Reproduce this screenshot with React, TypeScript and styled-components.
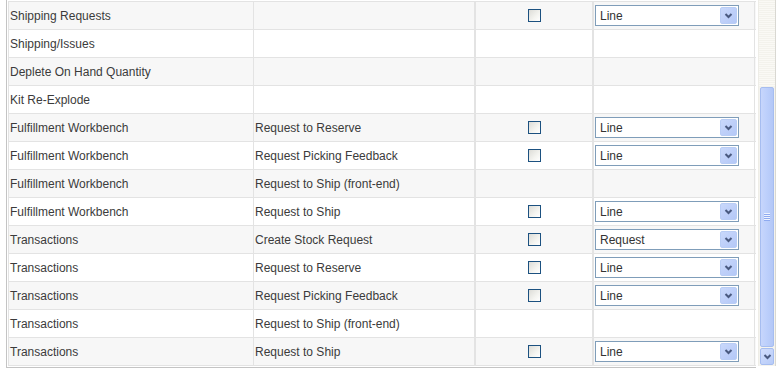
import React from "react";
import styled, { createGlobalStyle } from "styled-components";

interface RowData {
  area: string;
  action: string;
  check: boolean;
  select?: string;
}

const rows: RowData[] = [
  { area: "Shipping Requests", action: "", check: true, select: "Line" },
  { area: "Shipping/Issues", action: "", check: false },
  { area: "Deplete On Hand Quantity", action: "", check: false },
  { area: "Kit Re-Explode", action: "", check: false },
  { area: "Fulfillment Workbench", action: "Request to Reserve", check: true, select: "Line" },
  { area: "Fulfillment Workbench", action: "Request Picking Feedback", check: true, select: "Line" },
  { area: "Fulfillment Workbench", action: "Request to Ship (front-end)", check: false },
  { area: "Fulfillment Workbench", action: "Request to Ship", check: true, select: "Line" },
  { area: "Transactions", action: "Create Stock Request", check: true, select: "Request" },
  { area: "Transactions", action: "Request to Reserve", check: true, select: "Line" },
  { area: "Transactions", action: "Request Picking Feedback", check: true, select: "Line" },
  { area: "Transactions", action: "Request to Ship (front-end)", check: false },
  { area: "Transactions", action: "Request to Ship", check: true, select: "Line" },
];

const GlobalStyle = createGlobalStyle`
  html, body {
    margin: 0;
    padding: 0;
    background: #fff;
  }
  body {
    font-family: "Liberation Sans", Arial, sans-serif;
  }
`;

const Page = styled.div`
  width: 779px;
  height: 370px;
  display: flex;
  padding-left: 6px;
  box-sizing: border-box;
  overflow: hidden;
`;

const Frame = styled.div`
  display: flex;
  height: 367px;
  border-left: 1px solid #c4c4c4;
  border-bottom: 1px solid #c4c4c4;
  padding-left: 1px;
`;

const Grid = styled.div`
  display: flex;
  flex-direction: column;
  padding-top: 1px;
  width: 748px;
`;

const Row = styled.div<{ $odd: boolean }>`
  display: grid;
  grid-template-columns: 245px 221px 119px 162px;
  height: 28px;
  box-sizing: border-box;
  border-top: 1px solid #e3e3e3;
  background: ${(p) => (p.$odd ? "#f7f7f7" : "#ffffff")};
  &:last-child {
    border-bottom: 1px solid #e3e3e3;
    height: 29px;
  }
`;

const Cell = styled.div<{ $center?: boolean; $wide?: boolean }>`
  display: flex;
  align-items: center;
  justify-content: ${(p) => (p.$center ? "center" : "flex-start")};
  border-left: ${(p) => (p.$wide ? 2 : 1)}px solid #e3e3e3;
  border-right: ${(p) => (p.$wide ? "1px solid #e3e3e3" : "none")};
  padding-left: 1px;
  font-size: 12px;
  color: #3b3b3b;
  white-space: nowrap;
  overflow: hidden;
  &:last-child {
    border-right: 1px solid #e3e3e3;
    padding-left: 1px;
  }
`;

const CheckBox = styled.span`
  display: block;
  width: 13px;
  height: 13px;
  box-sizing: border-box;
  border: 1px solid #1c5180;
  background: linear-gradient(135deg, #dcdcd7 0%, #f4f4f0 60%, #ffffff 100%);
`;

const Select = styled.div`
  display: flex;
  align-items: center;
  width: 144px;
  height: 21px;
  box-sizing: border-box;
  border: 1px solid #7f9db9;
  background: #fff;
  padding: 1px;
  font-size: 12px;
  color: #333;
`;

const SelectText = styled.span`
  flex: 1;
  padding-left: 3px;
`;

const DropButton = styled.span`
  width: 17px;
  height: 17px;
  box-sizing: border-box;
  border: 1px solid #b9cdf5;
  border-radius: 2px;
  background: linear-gradient(135deg, #c9d8fb 0%, #b4c8f7 100%);
  display: flex;
  align-items: center;
  justify-content: center;
`;

const Chevron = () => (
  <svg width="9" height="6" viewBox="0 0 9 6">
    <path d="M1.5 1 L4.5 4 L7.5 1" stroke="#4a5a80" strokeWidth="2" fill="none" />
  </svg>
);

const Scrollbar = styled.div`
  width: 18px;
  margin-left: 2px;
  height: 366px;
  display: flex;
  flex-direction: column;
  background: #f4f3ee;
  border-left: 1px solid #eeede7;
  border-right: 1px solid #d9d8d2;
  box-sizing: border-box;
`;

const Track = styled.div`
  height: 87px;
  background: repeating-linear-gradient(0deg, #f3f2ec 0 1px, #faf9f5 1px 2px);
`;

const Thumb = styled.div`
  height: 260px;
  margin: 0 1px;
  box-sizing: border-box;
  border: 1px solid #a6bdf0;
  border-radius: 2px;
  background: linear-gradient(90deg, #c7d6fc 0%, #bccffb 50%, #b3c7f7 100%);
  display: flex;
  align-items: center;
  justify-content: center;
`;

const Grip = styled.div`
  width: 6px;
  height: 8px;
  background: repeating-linear-gradient(180deg, #eef3fe 0 1px, #8eaaf0 1px 2px);
`;

const ArrowButton = styled.div`
  height: 17px;
  margin: 1px 1px 0;
  box-sizing: border-box;
  border: 1px solid #a6bdf0;
  border-radius: 2px;
  background: linear-gradient(135deg, #d2defd 0%, #b7cbf8 100%);
  display: flex;
  align-items: center;
  justify-content: center;
`;

const App: React.FC = () => (
  <>
    <GlobalStyle />
    <Page>
      <Frame>
        <Grid>
          {rows.map((row, i) => (
            <Row key={i} $odd={i % 2 === 0}>
              <Cell>{row.area}</Cell>
              <Cell>{row.action}</Cell>
              <Cell $center $wide>{row.check && <CheckBox />}</Cell>
              <Cell>
                {row.select && (
                  <Select>
                    <SelectText>{row.select}</SelectText>
                    <DropButton>
                      <Chevron />
                    </DropButton>
                  </Select>
                )}
              </Cell>
            </Row>
          ))}
        </Grid>
      </Frame>
      <Scrollbar>
        <Track />
        <Thumb>
          <Grip />
        </Thumb>
        <ArrowButton>
          <Chevron />
        </ArrowButton>
      </Scrollbar>
    </Page>
  </>
);

export default App;
